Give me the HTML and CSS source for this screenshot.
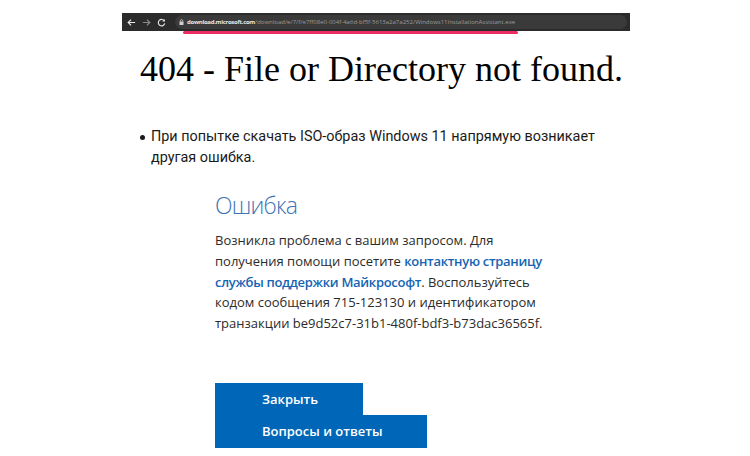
FILE: index.html
```html
<!DOCTYPE html>
<html lang="ru">
<head>
    <meta charset="UTF-8">
    <meta name="viewport" content="width=device-width, initial-scale=1.0">
    <title>Ошибка загрузки Windows 11</title>
    <link rel="stylesheet" href="styles.css">
</head>
<body>
    <div class="shot">
        <div class="browser-bar">
            <svg class="nav-icon" width="9" height="9" viewBox="0 0 10 10"><path d="M9 5H1.5M4.5 1.8L1.3 5l3.2 3.2" fill="none" stroke="#e8e8e8" stroke-width="1.3"/></svg>
            <svg class="nav-icon" width="9" height="9" viewBox="0 0 10 10"><path d="M1 5h7.5M5.5 1.8L8.7 5 5.5 8.2" fill="none" stroke="#8a8a8a" stroke-width="1.3"/></svg>
            <svg class="nav-icon" width="9" height="9" viewBox="0 0 10 10"><path d="M8.2 3.4A3.6 3.6 0 1 0 8.6 6" fill="none" stroke="#e0e0e0" stroke-width="1.3"/><path d="M8.8 1v3H5.8z" fill="#e0e0e0"/></svg>
            <div class="url-pill">
                <svg width="5" height="6" viewBox="0 0 5 6"><rect x="0.5" y="2.5" width="4" height="3.5" fill="#cfcfcf"/><path d="M1.3 2.6V1.8a1.2 1.2 0 0 1 2.4 0v.8" fill="none" stroke="#cfcfcf" stroke-width="0.8"/></svg>
                <span class="url"><b>download.microsoft.com</b>/download/e/7/f/e7ff08e0-004f-4a6d-bf5f-5613a2a7a252/Windows11InstallationAssistant.exe</span>
            </div>
        </div>
        <div class="mark"></div>
        <h1 class="iis-title">404 - File or Directory not found.</h1>
    </div>

    <ul class="notes">
        <li>При попытке скачать ISO-образ Windows 11 напрямую возникает другая ошибка.</li>
    </ul>

    <div class="ms-error">
        <h2>Ошибка</h2>
        <p>Возникла проблема с вашим запросом. Для получения помощи посетите <a href="#">контактную страницу службы поддержки Майкрософт</a>. Воспользуйтесь кодом сообщения 715-123130 и идентификатором транзакции <span class="nowrap">be9d52c7-31b1-480f-bdf3-b73dac36565f.</span></p>
        <div class="actions">
            <button class="btn btn-close">Закрыть</button>
            <button class="btn btn-faq">Вопросы и ответы</button>
        </div>
    </div>
</body>
</html>
```

FILE: styles.css
```css
body {
    margin: 0;
    padding: 0;
    background-color: #fff;
    font-family: Roboto, Arial, sans-serif;
    color: #111;
}
.shot {
    padding-top: 13px;
}
.browser-bar {
    margin-left: 122px;
    width: 508px;
    height: 18px;
    background-color: #2b2b2b;
    display: flex;
    align-items: center;
    padding-left: 5px;
    box-sizing: border-box;
}
.nav-icon {
    margin-right: 6px;
}
.url-pill {
    margin-left: 3px;
    height: 14px;
    flex: 1;
    margin-right: 3px;
    background-color: #3a3a3a;
    border-radius: 7px;
    display: flex;
    align-items: center;
    padding-left: 4px;
    gap: 3px;
}
.url {
    font-family: "Open Sans", Arial, sans-serif;
    font-size: 6px;
    color: #9c9c9c;
    white-space: nowrap;
}
.url b {
    color: #e6e6e6;
    font-weight: 700;
    letter-spacing: -0.3px;
}
.mark {
    margin-left: 183px;
    width: 335px;
    height: 3px;
    background-color: #ec2d63;
    border-radius: 2px;
}
.iis-title {
    margin: 17px 0 0 140px;
    font-family: "Liberation Serif", "Times New Roman", serif;
    font-weight: normal;
    font-size: 36px;
    line-height: 36px;
    color: #000;
}
.notes {
    list-style: none;
    margin: 39px 0 0 0;
    padding: 0 0 0 151px;
    width: 455px;
}
.notes li {
    position: relative;
    font-size: 14.4px;
    line-height: 21px;
    color: #1a1a1a;
}
.notes li::before {
    content: "";
    position: absolute;
    left: -11px;
    top: 9px;
    width: 5px;
    height: 5px;
    border-radius: 50%;
    background-color: #1a1a1a;
}
.ms-error {
    margin: 21px 0 0 215px;
    width: 350px;
    font-family: "Open Sans", "Segoe UI", sans-serif;
}
.ms-error h2 {
    margin: 0;
    font-size: 23px;
    font-weight: 300;
    letter-spacing: -0.8px;
    line-height: 32px;
    color: #3f74b3;
}
.ms-error p {
    margin: 9px 0 0 0;
    font-size: 13px;
    line-height: 20.8px;
    color: #2b2b2b;
}
.ms-error a {
    color: #1464b4;
    text-decoration: none;
    font-weight: 600;
    letter-spacing: -0.3px;
}
.nowrap {
    white-space: nowrap;
}
.actions {
    margin-top: 49px;
    display: flex;
    flex-direction: column;
    align-items: flex-start;
}
.btn {
    border: none;
    background-color: #0067b8;
    color: #fff;
    font-family: "Open Sans", "Segoe UI", sans-serif;
    font-weight: 600;
    font-size: 13px;
    text-align: left;
    padding: 0 0 0 47px;
    cursor: pointer;
}
.btn-close {
    width: 148px;
    height: 32px;
}
.btn-faq {
    width: 212px;
    height: 33px;
}
```
